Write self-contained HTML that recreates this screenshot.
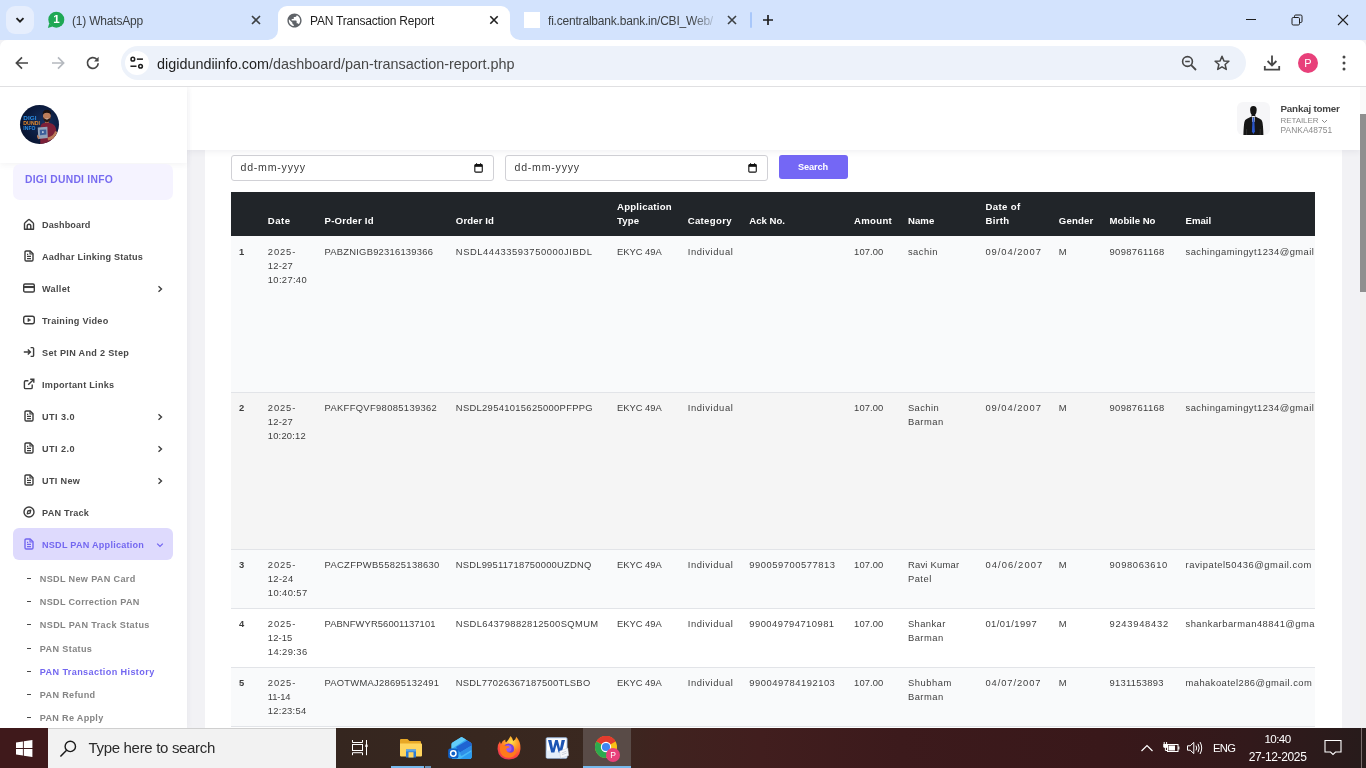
<!DOCTYPE html>
<html lang="en">
<head>
<meta charset="utf-8">
<title>PAN Transaction Report</title>
<style>
*{box-sizing:border-box;margin:0;padding:0}
html,body{width:1366px;height:768px;overflow:hidden;background:#fff;font-family:"Liberation Sans",sans-serif;}
.abs{position:absolute}
.t{position:absolute;white-space:nowrap}
#screen{will-change:transform;position:relative;width:1366px;height:768px;overflow:hidden;background:#f2f2f5}
#tabstrip{position:absolute;left:0;top:0;width:1366px;height:40px;background:#d3e3fd}
#toolbar{position:absolute;left:0;top:40px;width:1366px;height:47px;background:#fff;border-bottom:1px solid #e0e0e2;border-radius:7px 7px 0 0}
#omni{position:absolute;left:121px;top:6px;width:1125px;height:34px;border-radius:17px;background:#edf2fa}
.tabtxt{position:absolute;top:13.5px;font-size:12px;line-height:14px;color:#1f1f1f;white-space:nowrap;letter-spacing:-0.2px}
#page{position:absolute;left:0;top:87px;width:1366px;height:641px;overflow:hidden;background:#f2f2f5}
#sidebar{position:absolute;left:0;top:0;width:187px;height:641px;background:#fff;box-shadow:1px 0 6px rgba(60,60,90,.05)}
#topbar{position:absolute;left:187px;top:0;width:1173px;height:63px;background:#fff;box-shadow:0 2px 6px rgba(60,60,90,.07)}
#card{position:absolute;left:205px;top:63px;width:1137px;height:600px;background:#fff}
#tbl{position:absolute;left:231px;top:105px;width:1084px;height:560px;overflow:hidden}
.row{position:absolute;left:0;width:1084px;border-top:1px solid #e2e4e8}
.inp{position:absolute;top:68px;height:26px;width:263px;border:1px solid #d1d1d6;border-radius:3px;background:#fff}
#taskbar{position:absolute;left:0;top:728px;width:1366px;height:40px;background:linear-gradient(90deg,#3f191b 0px,#3f191b 48px,#35261f 336px,#38271f 480px,#3a2820 600px,#40221f 670px,#411e1e 760px,#3c1a1c 900px,#39181a 1100px,#32191b 1250px,#271b1b 1366px)}
.tb{position:absolute;color:#fff;white-space:nowrap}

</style>
</head>
<body>
<div id="screen">
<!--CHROME-->
<div id="tabstrip">
  <!-- tab search button -->
  <div class="abs" style="left:6px;top:6px;width:28px;height:28px;border-radius:9px;background:#e6eefd"></div>
  <svg class="abs" style="left:13px;top:13px" width="14" height="14" viewBox="0 0 14 14"><path d="M3.5 5.2 L7 8.7 L10.5 5.2" fill="none" stroke="#1f1f1f" stroke-width="1.9"/></svg>
  <!-- whatsapp tab -->
  <svg class="abs" style="left:47px;top:11px" width="18" height="18" viewBox="0 0 18 18"><circle cx="9.3" cy="8.7" r="8" fill="#1fa855"/><path d="M2.2 12.5 L0.9 17 L5.6 15.6Z" fill="#1fa855"/></svg>
  <div class="abs" style="left:52px;top:13px;width:9px;font-size:11.5px;font-weight:bold;color:#fff;line-height:13px;text-align:center">1</div>
  <div class="tabtxt" style="left:72px;color:#3c4043">(1) WhatsApp</div>
  <svg class="abs" style="left:250px;top:14px" width="12" height="12" viewBox="0 0 12 12"><path d="M2 2 L10 10 M10 2 L2 10" stroke="#3c4043" stroke-width="1.6"/></svg>
  <!-- active tab -->
  <div class="abs" style="left:278px;top:6px;width:232px;height:34px;background:#fff;border-radius:9px 9px 0 0"></div>
  <svg class="abs" style="left:268px;top:30px" width="10" height="10" viewBox="0 0 10 10"><path d="M10 0 V10 H0 A10 10 0 0 0 10 0Z" fill="#fff"/></svg>
  <svg class="abs" style="left:510px;top:30px" width="10" height="10" viewBox="0 0 10 10"><path d="M0 0 V10 H10 A10 10 0 0 1 0 0Z" fill="#fff"/></svg>
  <svg class="abs" style="left:285.5px;top:11.5px" width="17" height="17" viewBox="0 0 24 24"><path fill="#5f6368" d="M12 2C6.48 2 2 6.48 2 12s4.48 10 10 10 10-4.48 10-10S17.52 2 12 2zm-1 17.93c-3.95-.49-7-3.85-7-7.93 0-.62.08-1.21.21-1.79L9 15v1c0 1.1.9 2 2 2v1.93zm6.9-2.54c-.26-.81-1-1.39-1.9-1.39h-1v-3c0-.55-.45-1-1-1H8v-2h2c.55 0 1-.45 1-1V7h2c1.1 0 2-.9 2-2v-.41c2.93 1.19 5 4.06 5 7.41 0 2.08-.8 3.97-2.1 5.39z"/></svg>
  <div class="tabtxt" style="left:310px">PAN Transaction Report</div>
  <svg class="abs" style="left:488px;top:14px" width="12" height="12" viewBox="0 0 12 12"><path d="M2.3 2.3 L9.7 9.7 M9.7 2.3 L2.3 9.7" stroke="#1f1f1f" stroke-width="1.6"/></svg>
  <!-- third tab -->
  <div class="abs" style="left:524px;top:12px;width:16px;height:16px;background:#fff"></div>
  <div class="tabtxt" style="left:548px;color:#3c4043;width:171px;overflow:hidden;-webkit-mask-image:linear-gradient(90deg,#000 84%,transparent 100%);mask-image:linear-gradient(90deg,#000 84%,transparent 100%)">fi.centralbank.bank.in/CBI_Web/</div>
  <svg class="abs" style="left:726px;top:14px" width="12" height="12" viewBox="0 0 12 12"><path d="M2 2 L10 10 M10 2 L2 10" stroke="#3c4043" stroke-width="1.6"/></svg>
  <div class="abs" style="left:750px;top:12px;width:2px;height:16px;background:#a8c7fa;border-radius:1px"></div>
  <svg class="abs" style="left:761px;top:13px" width="14" height="14" viewBox="0 0 14 14"><path d="M7 2 V12 M2 7 H12" stroke="#1f1f1f" stroke-width="1.7"/></svg>
  <!-- window controls -->
  <div class="abs" style="left:1246px;top:19px;width:10px;height:1px;background:#1f1f1f"></div>
  <svg class="abs" style="left:1291px;top:14px" width="12" height="12" viewBox="0 0 12 12"><rect x="1" y="3.5" width="7.5" height="7.5" rx="1.2" fill="none" stroke="#1f1f1f" stroke-width="1"/><path d="M3.5 3.5 V2.2 Q3.5 1 4.7 1 H9.8 Q11 1 11 2.2 V7.3 Q11 8.5 9.8 8.5 H8.5" fill="none" stroke="#1f1f1f" stroke-width="1"/></svg>
  <svg class="abs" style="left:1337px;top:14px" width="12" height="12" viewBox="0 0 12 12"><path d="M1 1 L11 11 M11 1 L1 11" stroke="#1f1f1f" stroke-width="1.1"/></svg>
</div>
<div id="toolbar">
  <svg class="abs" style="left:14px;top:15px" width="16" height="16" viewBox="0 0 16 16"><path d="M14 8 H2.6 M8 2.4 L2.4 8 L8 13.6" fill="none" stroke="#474747" stroke-width="1.7"/></svg>
  <svg class="abs" style="left:50px;top:15px" width="16" height="16" viewBox="0 0 16 16"><path d="M2 8 H13.4 M8 2.4 L13.6 8 L8 13.6" fill="none" stroke="#b5b9bf" stroke-width="1.7"/></svg>
  <svg class="abs" style="left:85px;top:15px" width="16" height="16" viewBox="0 0 16 16"><path d="M13.2 8.2 A5.4 5.4 0 1 1 11.6 4.1" fill="none" stroke="#474747" stroke-width="1.7"/><path d="M13.6 1.8 V6.4 H9 Z" fill="#474747"/></svg>
  <div id="omni">
    <div class="abs" style="left:4px;top:5px;width:24px;height:24px;border-radius:12px;background:#fff"></div>
    <svg class="abs" style="left:8.3px;top:9.3px" width="15.4" height="15.4" viewBox="0 0 16 16"><circle cx="4" cy="4.3" r="1.9" fill="none" stroke="#1f1f1f" stroke-width="1.6"/><path d="M8.2 4.3 H14.5" stroke="#1f1f1f" stroke-width="1.6"/><circle cx="12" cy="11.7" r="1.9" fill="none" stroke="#1f1f1f" stroke-width="1.6"/><path d="M1.5 11.7 H7.8" stroke="#1f1f1f" stroke-width="1.6"/></svg>
    <div class="abs" style="left:36px;top:8px;font-size:14.4px;line-height:20px;color:#1f1f1f;white-space:nowrap;letter-spacing:0px">digidundiinfo.com<span style="color:#474747">/dashboard/pan-transaction-report.php</span></div>
    <svg class="abs" style="left:1059px;top:8px" width="18" height="18" viewBox="0 0 18 18"><circle cx="7.5" cy="7.5" r="4.9" fill="none" stroke="#474747" stroke-width="1.6"/><path d="M11.2 11.2 L16 16" stroke="#474747" stroke-width="1.8"/><path d="M5.2 7.5 H9.8" stroke="#474747" stroke-width="1.5"/></svg>
    <svg class="abs" style="left:1092px;top:8px" width="18" height="18" viewBox="0 0 18 18"><path d="M9 2.2 L10.9 6.9 L15.9 7.3 L12.1 10.5 L13.3 15.4 L9 12.8 L4.7 15.4 L5.9 10.5 L2.1 7.3 L7.1 6.9Z" fill="none" stroke="#474747" stroke-width="1.5" stroke-linejoin="round"/></svg>
  </div>
  <svg class="abs" style="left:1263px;top:14px" width="18" height="18" viewBox="0 0 18 18"><path d="M9 1.5 V11 M4.6 7 L9 11.4 L13.4 7" fill="none" stroke="#474747" stroke-width="1.8"/><path d="M1.8 12 V15.6 H16.2 V12" fill="none" stroke="#474747" stroke-width="1.8"/></svg>
  <div class="abs" style="left:1298px;top:13px;width:20px;height:20px;border-radius:10px;background:#e8407a;color:#fff;font-size:11px;line-height:20px;text-align:center">P</div>
  <svg class="abs" style="left:1341px;top:14px" width="6" height="18" viewBox="0 0 6 18"><circle cx="3" cy="3" r="1.5" fill="#474747"/><circle cx="3" cy="9" r="1.5" fill="#474747"/><circle cx="3" cy="15" r="1.5" fill="#474747"/></svg>
</div>

<!--PAGE-->
<div id="page">
<div id="card"></div>
<!-- filters -->
<div class="inp" style="left:231px"></div>
<div class="inp" style="left:505px"></div>
<svg class="abs" style="left:473.9px;top:76.2px" width="9.1" height="10" viewBox="0 0 10 11"><rect x="0.9" y="1.8" width="8.2" height="8.2" rx="1" fill="none" stroke="#111" stroke-width="1.2"/><rect x="0.9" y="1.8" width="8.2" height="2.4" fill="#111"/><path d="M2.8 0.4 V2 M7.2 0.4 V2" stroke="#111" stroke-width="1.2"/></svg>
<svg class="abs" style="left:747.9px;top:76.2px" width="9.1" height="10" viewBox="0 0 10 11"><rect x="0.9" y="1.8" width="8.2" height="8.2" rx="1" fill="none" stroke="#111" stroke-width="1.2"/><rect x="0.9" y="1.8" width="8.2" height="2.4" fill="#111"/><path d="M2.8 0.4 V2 M7.2 0.4 V2" stroke="#111" stroke-width="1.2"/></svg>
<div class="abs" style="left:779px;top:68px;width:69px;height:24px;border-radius:3px;background:#7467f5"></div>
<!-- table -->
<div id="tbl">
  <div class="abs" style="left:0;top:0;width:1084px;height:44px;background:#212529"></div>
  <div class="row" style="top:44px;height:157px;background:#f9fafb;border-top:0"></div>
  <div class="row" style="top:200px;height:158px;background:#f5f5f5"></div>
  <div class="row" style="top:357px;height:60px;background:#f9fafb"></div>
  <div class="row" style="top:416px;height:60px;background:#fff"></div>
  <div class="row" style="top:475px;height:60px;background:#f9fafb"></div>
  <div class="row" style="top:534px;height:59px;background:#fff"></div>
</div>
<div id="clipmain" class="abs" style="left:231px;top:0;width:1084px;height:641px;overflow:hidden"><div class="abs" style="left:-231px;top:0;width:1366px;height:641px">
<div class="t" style="left:267.8px;top:126.5px;font-size:9.6px;line-height:14px;font-weight:bold;color:#fff;letter-spacing:0.458px;">Date</div>
<div class="t" style="left:324.5px;top:126.5px;font-size:9.6px;line-height:14px;font-weight:bold;color:#fff;letter-spacing:0.240px;">P-Order Id</div>
<div class="t" style="left:455.8px;top:126.5px;font-size:9.6px;line-height:14px;font-weight:bold;color:#fff;letter-spacing:0.116px;">Order Id</div>
<div class="t" style="left:617.0px;top:112.5px;font-size:9.6px;line-height:14px;font-weight:bold;color:#fff;letter-spacing:0.235px;">Application</div>
<div class="t" style="left:617.0px;top:126.5px;font-size:9.6px;line-height:14px;font-weight:bold;color:#fff;letter-spacing:0.146px;">Type</div>
<div class="t" style="left:687.7px;top:126.5px;font-size:9.6px;line-height:14px;font-weight:bold;color:#fff;letter-spacing:0.321px;">Category</div>
<div class="t" style="left:749.3px;top:126.5px;font-size:9.6px;line-height:14px;font-weight:bold;color:#fff;letter-spacing:-0.021px;">Ack No.</div>
<div class="t" style="left:854.1px;top:126.5px;font-size:9.6px;line-height:14px;font-weight:bold;color:#fff;letter-spacing:0.285px;">Amount</div>
<div class="t" style="left:907.9px;top:126.5px;font-size:9.6px;line-height:14px;font-weight:bold;color:#fff;letter-spacing:0.074px;">Name</div>
<div class="t" style="left:985.4px;top:112.5px;font-size:9.6px;line-height:14px;font-weight:bold;color:#fff;letter-spacing:0.382px;">Date of</div>
<div class="t" style="left:985.4px;top:126.5px;font-size:9.6px;line-height:14px;font-weight:bold;color:#fff;letter-spacing:0.358px;">Birth</div>
<div class="t" style="left:1058.8px;top:126.5px;font-size:9.6px;line-height:14px;font-weight:bold;color:#fff;letter-spacing:0.165px;">Gender</div>
<div class="t" style="left:1109.5px;top:126.5px;font-size:9.6px;line-height:14px;font-weight:bold;color:#fff;letter-spacing:0.018px;">Mobile No</div>
<div class="t" style="left:1185.5px;top:126.5px;font-size:9.6px;line-height:14px;font-weight:bold;color:#fff;letter-spacing:0.020px;">Email</div>
<div class="t" style="left:239.0px;top:157.5px;font-size:9.4px;line-height:14px;font-weight:bold;color:#3e3e3e;letter-spacing:0.000px;">1</div>
<div class="t" style="left:267.8px;top:157.5px;font-size:9.4px;line-height:14px;color:#3e3e3e;letter-spacing:0.892px;">2025-</div>
<div class="t" style="left:267.8px;top:171.5px;font-size:9.4px;line-height:14px;color:#3e3e3e;letter-spacing:0.226px;">12-27</div>
<div class="t" style="left:267.8px;top:185.5px;font-size:9.4px;line-height:14px;color:#3e3e3e;letter-spacing:0.333px;">10:27:40</div>
<div class="t" style="left:324.5px;top:157.5px;font-size:9.4px;line-height:14px;color:#3e3e3e;letter-spacing:0.240px;">PABZNIGB92316139366</div>
<div class="t" style="left:455.8px;top:157.5px;font-size:9.4px;line-height:14px;color:#3e3e3e;letter-spacing:0.571px;">NSDL44433593750000JIBDL</div>
<div class="t" style="left:617.0px;top:157.5px;font-size:9.4px;line-height:14px;color:#3e3e3e;letter-spacing:-0.004px;">EKYC 49A</div>
<div class="t" style="left:687.7px;top:157.5px;font-size:9.4px;line-height:14px;color:#3e3e3e;letter-spacing:0.618px;">Individual</div>
<div class="t" style="left:854.1px;top:157.5px;font-size:9.4px;line-height:14px;color:#3e3e3e;letter-spacing:0.093px;">107.00</div>
<div class="t" style="left:907.9px;top:157.5px;font-size:9.4px;line-height:14px;color:#3e3e3e;letter-spacing:0.507px;">sachin</div>
<div class="t" style="left:985.4px;top:157.5px;font-size:9.4px;line-height:14px;color:#3e3e3e;letter-spacing:0.956px;">09/04/2007</div>
<div class="t" style="left:1058.8px;top:157.5px;font-size:9.4px;line-height:14px;color:#3e3e3e;letter-spacing:0.000px;">M</div>
<div class="t" style="left:1109.5px;top:157.5px;font-size:9.4px;line-height:14px;color:#3e3e3e;letter-spacing:0.373px;">9098761168</div>
<div class="t" style="left:1185.5px;top:157.5px;font-size:9.4px;line-height:14px;color:#3e3e3e;letter-spacing:0.454px;">sachingamingyt1234@gmail.com</div>
<div class="t" style="left:239.0px;top:313.5px;font-size:9.4px;line-height:14px;font-weight:bold;color:#3e3e3e;letter-spacing:0.000px;">2</div>
<div class="t" style="left:267.8px;top:313.5px;font-size:9.4px;line-height:14px;color:#3e3e3e;letter-spacing:0.892px;">2025-</div>
<div class="t" style="left:267.8px;top:327.5px;font-size:9.4px;line-height:14px;color:#3e3e3e;letter-spacing:0.226px;">12-27</div>
<div class="t" style="left:267.8px;top:341.5px;font-size:9.4px;line-height:14px;color:#3e3e3e;letter-spacing:0.200px;">10:20:12</div>
<div class="t" style="left:324.5px;top:313.5px;font-size:9.4px;line-height:14px;color:#3e3e3e;letter-spacing:0.344px;">PAKFFQVF98085139362</div>
<div class="t" style="left:455.8px;top:313.5px;font-size:9.4px;line-height:14px;color:#3e3e3e;letter-spacing:0.321px;">NSDL29541015625000PFPPG</div>
<div class="t" style="left:617.0px;top:313.5px;font-size:9.4px;line-height:14px;color:#3e3e3e;letter-spacing:-0.004px;">EKYC 49A</div>
<div class="t" style="left:687.7px;top:313.5px;font-size:9.4px;line-height:14px;color:#3e3e3e;letter-spacing:0.618px;">Individual</div>
<div class="t" style="left:854.1px;top:313.5px;font-size:9.4px;line-height:14px;color:#3e3e3e;letter-spacing:0.093px;">107.00</div>
<div class="t" style="left:907.9px;top:313.5px;font-size:9.4px;line-height:14px;color:#3e3e3e;letter-spacing:0.423px;">Sachin</div>
<div class="t" style="left:907.9px;top:327.5px;font-size:9.4px;line-height:14px;color:#3e3e3e;letter-spacing:0.486px;">Barman</div>
<div class="t" style="left:985.4px;top:313.5px;font-size:9.4px;line-height:14px;color:#3e3e3e;letter-spacing:0.956px;">09/04/2007</div>
<div class="t" style="left:1058.8px;top:313.5px;font-size:9.4px;line-height:14px;color:#3e3e3e;letter-spacing:0.000px;">M</div>
<div class="t" style="left:1109.5px;top:313.5px;font-size:9.4px;line-height:14px;color:#3e3e3e;letter-spacing:0.373px;">9098761168</div>
<div class="t" style="left:1185.5px;top:313.5px;font-size:9.4px;line-height:14px;color:#3e3e3e;letter-spacing:0.454px;">sachingamingyt1234@gmail.com</div>
<div class="t" style="left:239.0px;top:470.5px;font-size:9.4px;line-height:14px;font-weight:bold;color:#3e3e3e;letter-spacing:0.000px;">3</div>
<div class="t" style="left:267.8px;top:470.5px;font-size:9.4px;line-height:14px;color:#3e3e3e;letter-spacing:0.892px;">2025-</div>
<div class="t" style="left:267.8px;top:484.5px;font-size:9.4px;line-height:14px;color:#3e3e3e;letter-spacing:0.337px;">12-24</div>
<div class="t" style="left:267.8px;top:498.5px;font-size:9.4px;line-height:14px;color:#3e3e3e;letter-spacing:0.400px;">10:40:57</div>
<div class="t" style="left:324.5px;top:470.5px;font-size:9.4px;line-height:14px;color:#3e3e3e;letter-spacing:0.338px;">PACZFPWB55825138630</div>
<div class="t" style="left:455.8px;top:470.5px;font-size:9.4px;line-height:14px;color:#3e3e3e;letter-spacing:0.216px;">NSDL99511718750000UZDNQ</div>
<div class="t" style="left:617.0px;top:470.5px;font-size:9.4px;line-height:14px;color:#3e3e3e;letter-spacing:-0.004px;">EKYC 49A</div>
<div class="t" style="left:687.7px;top:470.5px;font-size:9.4px;line-height:14px;color:#3e3e3e;letter-spacing:0.618px;">Individual</div>
<div class="t" style="left:749.3px;top:470.5px;font-size:9.4px;line-height:14px;color:#3e3e3e;letter-spacing:0.537px;">990059700577813</div>
<div class="t" style="left:854.1px;top:470.5px;font-size:9.4px;line-height:14px;color:#3e3e3e;letter-spacing:0.093px;">107.00</div>
<div class="t" style="left:907.9px;top:470.5px;font-size:9.4px;line-height:14px;color:#3e3e3e;letter-spacing:0.254px;">Ravi Kumar</div>
<div class="t" style="left:907.9px;top:484.5px;font-size:9.4px;line-height:14px;color:#3e3e3e;letter-spacing:0.494px;">Patel</div>
<div class="t" style="left:985.4px;top:470.5px;font-size:9.4px;line-height:14px;color:#3e3e3e;letter-spacing:1.103px;">04/06/2007</div>
<div class="t" style="left:1058.8px;top:470.5px;font-size:9.4px;line-height:14px;color:#3e3e3e;letter-spacing:0.000px;">M</div>
<div class="t" style="left:1109.5px;top:470.5px;font-size:9.4px;line-height:14px;color:#3e3e3e;letter-spacing:0.617px;">9098063610</div>
<div class="t" style="left:1185.5px;top:470.5px;font-size:9.4px;line-height:14px;color:#3e3e3e;letter-spacing:0.521px;">ravipatel50436@gmail.com</div>
<div class="t" style="left:239.0px;top:529.5px;font-size:9.4px;line-height:14px;font-weight:bold;color:#3e3e3e;letter-spacing:0.000px;">4</div>
<div class="t" style="left:267.8px;top:529.5px;font-size:9.4px;line-height:14px;color:#3e3e3e;letter-spacing:0.892px;">2025-</div>
<div class="t" style="left:267.8px;top:543.5px;font-size:9.4px;line-height:14px;color:#3e3e3e;letter-spacing:0.115px;">12-15</div>
<div class="t" style="left:267.8px;top:557.5px;font-size:9.4px;line-height:14px;color:#3e3e3e;letter-spacing:0.400px;">14:29:36</div>
<div class="t" style="left:324.5px;top:529.5px;font-size:9.4px;line-height:14px;color:#3e3e3e;letter-spacing:0.103px;">PABNFWYR56001137101</div>
<div class="t" style="left:455.8px;top:529.5px;font-size:9.4px;line-height:14px;color:#3e3e3e;letter-spacing:0.381px;">NSDL64379882812500SQMUM</div>
<div class="t" style="left:617.0px;top:529.5px;font-size:9.4px;line-height:14px;color:#3e3e3e;letter-spacing:-0.004px;">EKYC 49A</div>
<div class="t" style="left:687.7px;top:529.5px;font-size:9.4px;line-height:14px;color:#3e3e3e;letter-spacing:0.618px;">Individual</div>
<div class="t" style="left:749.3px;top:529.5px;font-size:9.4px;line-height:14px;color:#3e3e3e;letter-spacing:0.468px;">990049794710981</div>
<div class="t" style="left:854.1px;top:529.5px;font-size:9.4px;line-height:14px;color:#3e3e3e;letter-spacing:0.093px;">107.00</div>
<div class="t" style="left:907.9px;top:529.5px;font-size:9.4px;line-height:14px;color:#3e3e3e;letter-spacing:0.427px;">Shankar</div>
<div class="t" style="left:907.9px;top:543.5px;font-size:9.4px;line-height:14px;color:#3e3e3e;letter-spacing:0.486px;">Barman</div>
<div class="t" style="left:985.4px;top:529.5px;font-size:9.4px;line-height:14px;color:#3e3e3e;letter-spacing:0.482px;">01/01/1997</div>
<div class="t" style="left:1058.8px;top:529.5px;font-size:9.4px;line-height:14px;color:#3e3e3e;letter-spacing:0.000px;">M</div>
<div class="t" style="left:1109.5px;top:529.5px;font-size:9.4px;line-height:14px;color:#3e3e3e;letter-spacing:0.722px;">9243948432</div>
<div class="t" style="left:1185.5px;top:529.5px;font-size:9.4px;line-height:14px;color:#3e3e3e;letter-spacing:0.481px;">shankarbarman48841@gmail.com</div>
<div class="t" style="left:239.0px;top:588.5px;font-size:9.4px;line-height:14px;font-weight:bold;color:#3e3e3e;letter-spacing:0.000px;">5</div>
<div class="t" style="left:267.8px;top:588.5px;font-size:9.4px;line-height:14px;color:#3e3e3e;letter-spacing:0.892px;">2025-</div>
<div class="t" style="left:267.8px;top:602.5px;font-size:9.4px;line-height:14px;color:#3e3e3e;letter-spacing:-0.151px;">11-14</div>
<div class="t" style="left:267.8px;top:616.5px;font-size:9.4px;line-height:14px;color:#3e3e3e;letter-spacing:0.267px;">12:23:54</div>
<div class="t" style="left:324.5px;top:588.5px;font-size:9.4px;line-height:14px;color:#3e3e3e;letter-spacing:0.255px;">PAOTWMAJ28695132491</div>
<div class="t" style="left:455.8px;top:588.5px;font-size:9.4px;line-height:14px;color:#3e3e3e;letter-spacing:0.256px;">NSDL77026367187500TLSBO</div>
<div class="t" style="left:617.0px;top:588.5px;font-size:9.4px;line-height:14px;color:#3e3e3e;letter-spacing:-0.004px;">EKYC 49A</div>
<div class="t" style="left:687.7px;top:588.5px;font-size:9.4px;line-height:14px;color:#3e3e3e;letter-spacing:0.618px;">Individual</div>
<div class="t" style="left:749.3px;top:588.5px;font-size:9.4px;line-height:14px;color:#3e3e3e;letter-spacing:0.523px;">990049784192103</div>
<div class="t" style="left:854.1px;top:588.5px;font-size:9.4px;line-height:14px;color:#3e3e3e;letter-spacing:0.093px;">107.00</div>
<div class="t" style="left:907.9px;top:588.5px;font-size:9.4px;line-height:14px;color:#3e3e3e;letter-spacing:0.548px;">Shubham</div>
<div class="t" style="left:907.9px;top:602.5px;font-size:9.4px;line-height:14px;color:#3e3e3e;letter-spacing:0.486px;">Barman</div>
<div class="t" style="left:985.4px;top:588.5px;font-size:9.4px;line-height:14px;color:#3e3e3e;letter-spacing:0.913px;">04/07/2007</div>
<div class="t" style="left:1058.8px;top:588.5px;font-size:9.4px;line-height:14px;color:#3e3e3e;letter-spacing:0.000px;">M</div>
<div class="t" style="left:1109.5px;top:588.5px;font-size:9.4px;line-height:14px;color:#3e3e3e;letter-spacing:0.268px;">9131153893</div>
<div class="t" style="left:1185.5px;top:588.5px;font-size:9.4px;line-height:14px;color:#3e3e3e;letter-spacing:0.451px;">mahakoatel286@gmail.com</div>
<div class="t" style="left:240.5px;top:72.6px;font-size:10.6px;line-height:14px;color:#3c3c3c;letter-spacing:0.770px;">dd-mm-yyyy</div>
<div class="t" style="left:514.5px;top:72.6px;font-size:10.6px;line-height:14px;color:#3c3c3c;letter-spacing:0.770px;">dd-mm-yyyy</div>
<div class="t" style="left:798.0px;top:73.0px;font-size:9.2px;line-height:14px;font-weight:bold;color:#fff;letter-spacing:-0.119px;">Search</div>
</div></div>
<div id="topbar">
  <div class="abs" style="left:1050px;top:15px;width:33px;height:33px;border-radius:6px;background:#f6f6f8;overflow:hidden">
    <svg class="abs" style="left:0;top:0" width="33" height="33" viewBox="0 0 33 33"><path d="M16.4 4 Q19.8 4 19.7 8 Q19.6 11 18.3 12.4 L18.3 14 H14.5 L14.5 12.4 Q13.2 11 13.1 8 Q13 4 16.4 4Z" fill="#141414"/><path d="M6.4 33 Q6.6 24 7.4 20 Q7.8 17.6 10 16.8 L14.6 14.6 L16.4 15.6 L18.2 14.6 L22.8 16.8 Q25 17.6 25.4 20 Q26.2 24 26.4 33Z" fill="#161616"/><path d="M14.9 14.8 L16.4 16.2 L17.9 14.8 L17.6 20 H15.2Z" fill="#dfe3ee"/><path d="M15.6 15.6 H17.2 L17.9 29.6 L16.4 32 L14.9 29.6Z" fill="#2a55c8"/><path d="M9.6 27 V33 M23.2 27 V33" stroke="#3a3a3a" stroke-width="0.7"/></svg>
  </div>
  <svg class="abs" style="left:1133.7px;top:31.6px" width="7" height="5" viewBox="0 0 7 5"><path d="M1 1 L3.5 3.5 L6 1" fill="none" stroke="#8a8a8a" stroke-width="1"/></svg>
</div>
<div class="t" style="left:1280.5px;top:14.6px;font-size:9.8px;line-height:14px;font-weight:bold;color:#444;letter-spacing:-0.194px;">Pankaj tomer</div>
<div class="t" style="left:1280.5px;top:29.3px;font-size:8.0px;line-height:10px;color:#8a8a8a;letter-spacing:-0.071px;">RETAILER</div>
<div class="t" style="left:1280.5px;top:37.6px;font-size:8.4px;line-height:10px;color:#8a8a8a;letter-spacing:0.057px;">PANKA48751</div>
<div id="sidebar">
  <div class="abs" style="left:0;top:0;width:187px;height:76px;background:#fff;box-shadow:0 2px 6px rgba(60,60,90,.06)"></div>
  <!-- logo -->
  <div class="abs" style="left:19.8px;top:17.6px;width:39.4px;height:39.4px;border-radius:20px;background:radial-gradient(circle at 62% 45%,#16305f 0%,#0b1a3c 55%,#060e24 100%);overflow:hidden">
    <svg class="abs" style="left:0;top:0" width="39.4" height="39.4" viewBox="0 0 40 40">
      <path d="M20.6 40 V24 Q20.6 19.4 24 18.4 L27.2 17.2 L30.4 18.4 Q36.8 19.8 37 27 V40Z" fill="#7c2038"/>
      <rect x="25.4" y="14.6" width="3.8" height="3.6" fill="#a96a4a"/>
      <ellipse cx="27.3" cy="11.2" rx="4" ry="5.2" fill="#bb7d5a"/>
      <path d="M23 10.4 Q22.6 4.8 27.3 4.8 Q32 4.8 31.6 10.4 Q31 7.8 27.3 7.8 Q23.6 7.8 23 10.4Z" fill="#181010"/>
      <path d="M23.4 12 Q23.6 17.4 27.3 17.4 Q31 17.4 31.2 12 Q30.6 14.4 27.3 14.2 Q24 14.4 23.4 12Z" fill="#2a1a15"/>
      <path d="M25.8 13.8 Q27.3 15 28.8 13.8" stroke="#f2e6dc" stroke-width="0.7" fill="none"/>
      <path d="M18 22.8 L27.8 22.2 L28.2 33.4 L18.6 34.6Z" fill="#93a3ba"/>
      <path d="M20 25.2 L26.6 24.8 L26.8 30 L20.3 30.6Z" fill="#3b5f9a"/>
      <path d="M22.6 26.4 L24.6 27.5 L22.7 28.8Z" fill="#f0f4f8"/>
      <path d="M17.4 30 Q16.6 33 18.6 35 L20 33Z" fill="#bb7d5a"/>
      <path d="M28 33 Q34.5 31.5 35.6 26.4 L37.8 27.4 Q36.8 34.6 28.4 36Z" fill="#bb7d5a"/>
      <text x="3.4" y="14.9" font-family="Liberation Sans, sans-serif" font-size="5.3" font-weight="bold" fill="#2b8fe6" textLength="13.3" lengthAdjust="spacingAndGlyphs">DIGI</text>
      <text x="3.4" y="20.6" font-family="Liberation Sans, sans-serif" font-size="5.3" font-weight="bold" fill="#e48a2c" textLength="16.8" lengthAdjust="spacingAndGlyphs">DUNDI</text>
      <text x="3.4" y="25.6" font-family="Liberation Sans, sans-serif" font-size="5.3" font-weight="bold" fill="#2b8fe6" textLength="12.3" lengthAdjust="spacingAndGlyphs">INFO</text>
    </svg>
  </div>
  <!-- brand box -->
  <div class="abs" style="left:13px;top:77px;width:160px;height:36px;border-radius:7px;background:#f5f3ff"></div>
  <div class="t" style="left:25px;top:86px;font-size:10.3px;line-height:13px;font-weight:bold;color:#776bf0;letter-spacing:0.26px">DIGI DUNDI INFO</div>
<svg class="abs" style="left:23.0px;top:131.2px" width="12" height="12" viewBox="0 0 12 12"><path d="M1.5 11.2 V5.7 Q1.5 5.1 2 4.7 L5.4 1.7 Q6 1.2 6.6 1.7 L10 4.7 Q10.5 5.1 10.5 5.7 V11.2 Z" fill="none" stroke="#3c3c3c" stroke-width="1.4" stroke-linejoin="round"/><path d="M4.2 11.2 V8 A1.8 1.8 0 0 1 7.8 8 V11.2" fill="none" stroke="#3c3c3c" stroke-width="1.4"/></svg>
<div class="t" style="left:42.0px;top:132.0px;font-size:9.1px;line-height:12px;font-weight:bold;color:#484848;letter-spacing:0.106px;">Dashboard</div>
<svg class="abs" style="left:23.0px;top:163.2px" width="12" height="12" viewBox="0 0 12 12"><path d="M2 2.2 Q2 1 3.2 1 H7.2 L10 3.8 V9.8 Q10 11 8.8 11 H3.2 Q2 11 2 9.8Z" fill="none" stroke="#3c3c3c" stroke-width="1.4" stroke-linejoin="round"/><path d="M7 1.2 V4 H9.8" fill="none" stroke="#3c3c3c" stroke-width="1.2"/><path d="M4 6.4 H8 M4 8.6 H8" stroke="#3c3c3c" stroke-width="1.25"/><path d="M4 4.3 H5.2" stroke="#3c3c3c" stroke-width="1.25"/></svg>
<div class="t" style="left:42.0px;top:164.0px;font-size:9.1px;line-height:12px;font-weight:bold;color:#484848;letter-spacing:0.219px;">Aadhar Linking Status</div>
<svg class="abs" style="left:23.0px;top:195.2px" width="12" height="12" viewBox="0 0 12 12"><rect x="0.7" y="2" width="10.6" height="8" rx="1.3" fill="none" stroke="#3c3c3c" stroke-width="1.4"/><path d="M0.7 5 H11.3" stroke="#3c3c3c" stroke-width="2.1"/></svg>
<div class="t" style="left:42.0px;top:196.0px;font-size:9.1px;line-height:12px;font-weight:bold;color:#484848;letter-spacing:0.336px;">Wallet</div>
<svg class="abs" style="left:154.4px;top:196.0px" width="12" height="12" viewBox="0 0 12 12"><path d="M4.5 3.3 L7.5 6 L4.5 8.7" fill="none" stroke="#3c3c3c" stroke-width="1.35"/></svg>
<svg class="abs" style="left:23.0px;top:227.2px" width="12" height="12" viewBox="0 0 12 12"><rect x="0.7" y="2.2" width="10.6" height="7.6" rx="2" fill="none" stroke="#3c3c3c" stroke-width="1.4"/><path d="M4.9 4.3 L7.8 6 L4.9 7.7Z" fill="#3c3c3c" stroke="#3c3c3c" stroke-width="0.5" stroke-linejoin="round"/></svg>
<div class="t" style="left:42.0px;top:228.0px;font-size:9.1px;line-height:12px;font-weight:bold;color:#484848;letter-spacing:0.289px;">Training Video</div>
<svg class="abs" style="left:23.0px;top:259.2px" width="12" height="12" viewBox="0 0 12 12"><path d="M0.8 6 H7.2 M4.8 3.4 L7.4 6 L4.8 8.6" fill="none" stroke="#3c3c3c" stroke-width="1.4"/><path d="M7.6 1.6 H9.6 Q10.6 1.6 10.6 2.6 V9.4 Q10.6 10.4 9.6 10.4 H7.6" fill="none" stroke="#3c3c3c" stroke-width="1.4"/></svg>
<div class="t" style="left:42.0px;top:260.0px;font-size:9.1px;line-height:12px;font-weight:bold;color:#484848;letter-spacing:0.312px;">Set PIN And 2 Step</div>
<svg class="abs" style="left:23.0px;top:291.2px" width="12" height="12" viewBox="0 0 12 12"><path d="M5.4 2.8 H2.6 Q1.4 2.8 1.4 4 V9.4 Q1.4 10.6 2.6 10.6 H8 Q9.2 10.6 9.2 9.4 V6.6" fill="none" stroke="#3c3c3c" stroke-width="1.4"/><path d="M5.2 6.8 L10.6 1.4 M7.2 1.2 H10.8 V4.8" fill="none" stroke="#3c3c3c" stroke-width="1.4"/></svg>
<div class="t" style="left:42.0px;top:292.0px;font-size:9.1px;line-height:12px;font-weight:bold;color:#484848;letter-spacing:0.281px;">Important Links</div>
<svg class="abs" style="left:23.0px;top:323.2px" width="12" height="12" viewBox="0 0 12 12"><path d="M2 2.2 Q2 1 3.2 1 H7.2 L10 3.8 V9.8 Q10 11 8.8 11 H3.2 Q2 11 2 9.8Z" fill="none" stroke="#3c3c3c" stroke-width="1.4" stroke-linejoin="round"/><path d="M7 1.2 V4 H9.8" fill="none" stroke="#3c3c3c" stroke-width="1.2"/><path d="M4 6.4 H8 M4 8.6 H8" stroke="#3c3c3c" stroke-width="1.25"/><path d="M4 4.3 H5.2" stroke="#3c3c3c" stroke-width="1.25"/></svg>
<div class="t" style="left:42.0px;top:324.0px;font-size:9.1px;line-height:12px;font-weight:bold;color:#484848;letter-spacing:0.442px;">UTI 3.0</div>
<svg class="abs" style="left:154.4px;top:324.0px" width="12" height="12" viewBox="0 0 12 12"><path d="M4.5 3.3 L7.5 6 L4.5 8.7" fill="none" stroke="#3c3c3c" stroke-width="1.35"/></svg>
<svg class="abs" style="left:23.0px;top:355.2px" width="12" height="12" viewBox="0 0 12 12"><path d="M2 2.2 Q2 1 3.2 1 H7.2 L10 3.8 V9.8 Q10 11 8.8 11 H3.2 Q2 11 2 9.8Z" fill="none" stroke="#3c3c3c" stroke-width="1.4" stroke-linejoin="round"/><path d="M7 1.2 V4 H9.8" fill="none" stroke="#3c3c3c" stroke-width="1.2"/><path d="M4 6.4 H8 M4 8.6 H8" stroke="#3c3c3c" stroke-width="1.25"/><path d="M4 4.3 H5.2" stroke="#3c3c3c" stroke-width="1.25"/></svg>
<div class="t" style="left:42.0px;top:356.0px;font-size:9.1px;line-height:12px;font-weight:bold;color:#484848;letter-spacing:0.442px;">UTI 2.0</div>
<svg class="abs" style="left:154.4px;top:356.0px" width="12" height="12" viewBox="0 0 12 12"><path d="M4.5 3.3 L7.5 6 L4.5 8.7" fill="none" stroke="#3c3c3c" stroke-width="1.35"/></svg>
<svg class="abs" style="left:23.0px;top:387.2px" width="12" height="12" viewBox="0 0 12 12"><path d="M2 2.2 Q2 1 3.2 1 H7.2 L10 3.8 V9.8 Q10 11 8.8 11 H3.2 Q2 11 2 9.8Z" fill="none" stroke="#3c3c3c" stroke-width="1.4" stroke-linejoin="round"/><path d="M7 1.2 V4 H9.8" fill="none" stroke="#3c3c3c" stroke-width="1.2"/><path d="M4 6.4 H8 M4 8.6 H8" stroke="#3c3c3c" stroke-width="1.25"/><path d="M4 4.3 H5.2" stroke="#3c3c3c" stroke-width="1.25"/></svg>
<div class="t" style="left:42.0px;top:388.0px;font-size:9.1px;line-height:12px;font-weight:bold;color:#484848;letter-spacing:0.327px;">UTI New</div>
<svg class="abs" style="left:154.4px;top:388.0px" width="12" height="12" viewBox="0 0 12 12"><path d="M4.5 3.3 L7.5 6 L4.5 8.7" fill="none" stroke="#3c3c3c" stroke-width="1.35"/></svg>
<svg class="abs" style="left:23.0px;top:419.2px" width="12" height="12" viewBox="0 0 12 12"><circle cx="6" cy="6" r="5" fill="none" stroke="#3c3c3c" stroke-width="1.4"/><path d="M4.2 7.8 L4.9 4.9 L7.8 4.2 L7.1 7.1Z" fill="none" stroke="#3c3c3c" stroke-width="1.25" stroke-linejoin="round"/></svg>
<div class="t" style="left:42.0px;top:420.0px;font-size:9.1px;line-height:12px;font-weight:bold;color:#484848;letter-spacing:0.256px;">PAN Track</div>
<div class="abs" style="left:13px;top:441.0px;width:160px;height:32px;background:#dedafd;border-radius:6px"></div>
<svg class="abs" style="left:23.0px;top:451.2px" width="12" height="12" viewBox="0 0 12 12"><path d="M2 2.2 Q2 1 3.2 1 H7.2 L10 3.8 V9.8 Q10 11 8.8 11 H3.2 Q2 11 2 9.8Z" fill="none" stroke="#7367f0" stroke-width="1.4" stroke-linejoin="round"/><path d="M7 1.2 V4 H9.8" fill="none" stroke="#7367f0" stroke-width="1.2"/><path d="M4 6.4 H8 M4 8.6 H8" stroke="#7367f0" stroke-width="1.25"/><path d="M4 4.3 H5.2" stroke="#7367f0" stroke-width="1.25"/></svg>
<div class="t" style="left:42.0px;top:452.0px;font-size:9.1px;line-height:12px;font-weight:bold;color:#7367f0;letter-spacing:0.239px;">NSDL PAN Application</div>
<svg class="abs" style="left:153.6px;top:451.6px" width="12" height="12" viewBox="0 0 12 12"><path d="M3.2 4.6 L6 7.4 L8.8 4.6" fill="none" stroke="#7367f0" stroke-width="1.3"/></svg>
<div class="abs" style="left:27px;top:491.0px;width:4.4px;height:1.2px;background:#4a4a4a;border-radius:0px"></div>
<div class="t" style="left:39.8px;top:486.0px;font-size:9.1px;line-height:12px;font-weight:bold;color:#848484;letter-spacing:0.332px;">NSDL New PAN Card</div>
<div class="abs" style="left:27px;top:514.0px;width:4.4px;height:1.2px;background:#4a4a4a;border-radius:0px"></div>
<div class="t" style="left:39.8px;top:509.0px;font-size:9.1px;line-height:12px;font-weight:bold;color:#848484;letter-spacing:0.305px;">NSDL Correction PAN</div>
<div class="abs" style="left:27px;top:537.0px;width:4.4px;height:1.2px;background:#4a4a4a;border-radius:0px"></div>
<div class="t" style="left:39.8px;top:532.0px;font-size:9.1px;line-height:12px;font-weight:bold;color:#848484;letter-spacing:0.368px;">NSDL PAN Track Status</div>
<div class="abs" style="left:27px;top:561.0px;width:4.4px;height:1.2px;background:#4a4a4a;border-radius:0px"></div>
<div class="t" style="left:39.8px;top:556.0px;font-size:9.1px;line-height:12px;font-weight:bold;color:#848484;letter-spacing:0.364px;">PAN Status</div>
<div class="abs" style="left:27px;top:584.0px;width:4.4px;height:1.2px;background:#4a4a4a;border-radius:0px"></div>
<div class="t" style="left:39.8px;top:579.0px;font-size:9.1px;line-height:12px;font-weight:bold;color:#7367f0;letter-spacing:0.384px;">PAN Transaction History</div>
<div class="abs" style="left:27px;top:607.0px;width:4.4px;height:1.2px;background:#4a4a4a;border-radius:0px"></div>
<div class="t" style="left:39.8px;top:602.0px;font-size:9.1px;line-height:12px;font-weight:bold;color:#848484;letter-spacing:0.329px;">PAN Refund</div>
<div class="abs" style="left:27px;top:630.0px;width:4.4px;height:1.2px;background:#4a4a4a;border-radius:0px"></div>
<div class="t" style="left:39.8px;top:625.0px;font-size:9.1px;line-height:12px;font-weight:bold;color:#848484;letter-spacing:0.301px;">PAN Re Apply</div>
</div>
<!-- scrollbar -->
<div class="abs" style="left:1360px;top:0;width:6px;height:641px;background:#f1f1f1"></div>
<div class="abs" style="left:1360px;top:0;width:6px;height:27px;background:#fafafa"></div>
<div class="abs" style="left:1360px;top:27px;width:6px;height:178px;background:#8f8f8f"></div>

</div>
<!--TASKBAR-->
<div id="taskbar">
  <!-- start -->
  <svg class="abs" style="left:16px;top:12px" width="17" height="17" viewBox="0 0 17 17"><path d="M0 2.4 L6.9 1.4 V8 H0Z M7.8 1.3 L16.4 0 V8 H7.8Z M0 8.9 H6.9 V15.5 L0 14.5Z M7.8 8.9 H16.4 V17 L7.8 15.7Z" fill="#fff"/></svg>
  <!-- search box -->
  <div class="abs" style="left:48px;top:0;width:288px;height:40px;background:#f2f2f2;border-top:1px solid #cfcfcf"></div>
  <svg class="abs" style="left:58px;top:11px" width="20" height="20" viewBox="0 0 20 20"><circle cx="12.3" cy="7.4" r="5.2" fill="none" stroke="#1b1b1b" stroke-width="1.4"/><path d="M8.6 11.2 L2.4 17.6" stroke="#1b1b1b" stroke-width="1.5"/></svg>
  <div class="abs" style="left:88.5px;top:9.5px;font-size:15px;line-height:20px;color:#2b2b2b;white-space:nowrap;letter-spacing:-0.32px">Type here to search</div>

  <!-- task view -->
  <svg class="abs" style="left:350px;top:10px" width="20" height="20" viewBox="0 0 20 20"><rect x="2.5" y="6.5" width="10" height="6" fill="none" stroke="#fff" stroke-width="1"/><path d="M2.5 2 V4.5 H12.5 V2 M2.5 17.2 V14.7 H12.5 V17.2" fill="none" stroke="#fff" stroke-width="1"/><path d="M16.5 2 V17.2" stroke="#fff" stroke-width="1"/><rect x="15.4" y="6.6" width="2.2" height="2.4" fill="#fff"/></svg>
  <!-- explorer -->
  <svg class="abs" style="left:399px;top:9px" width="24" height="22" viewBox="0 0 24 22"><path d="M1 3 Q1 2 2 2 H8.5 L10.5 4 H21 Q22 4 22 5 V18 H1Z" fill="#e8a826"/><path d="M1 6.5 H22.4 Q23 6.5 23 7.2 V18.6 Q23 19.4 22.2 19.4 H1.8 Q1 19.4 1 18.6Z" fill="#ffd55e"/><path d="M7 12.5 H17 V20.5 H7Z" fill="#2d7bd4"/><path d="M9.5 15.2 H14.5 V20.5 H9.5Z" fill="#ffd55e"/><path d="M7 12.5 H17 V14.5 H7Z" fill="#5aa5ea"/></svg>
  <div class="abs" style="left:391px;top:37.7px;width:33px;height:2.3px;background:#76b9ed"></div>
  <div class="abs" style="left:425px;top:37.7px;width:6px;height:2.3px;background:#6792b8"></div>
  <!-- outlook -->
  <svg class="abs" style="left:447px;top:8px" width="26" height="26" viewBox="0 0 26 26"><path d="M4.5 8.2 Q4.5 7 5.5 6.4 L13.6 1.4 Q14.6 0.8 15.6 1.4 L23.6 6.4 Q24.6 7 24.6 8.2 V20.4 Q24.6 23 22 23 H7 Q4.5 23 4.5 20.4Z" fill="#35a7f2"/><path d="M4.5 8.2 Q4.5 7 5.5 6.4 L13.6 1.4 Q14.6 0.8 15.6 1.4 L19 3.6 L4.5 13Z" fill="#62cdfa"/><path d="M9 11 L20.4 4.4 L24.2 6.9 Q24.6 7.4 24.6 8.2 V9.4 L13 16.4Z" fill="#1f64d2"/><path d="M13 16.4 L24.6 9.4 V14 L14.6 20Z" fill="#2f8ee8"/><path d="M4.5 14 L14.6 20 L24.6 14 V20.4 Q24.6 23 22 23 H7 Q4.5 23 4.5 20.4Z" fill="#49b8f6"/><path d="M13 23 L24.6 15.5 V20.4 Q24.6 23 22 23Z" fill="#2a9af0"/><rect x="1.2" y="12.4" width="10.2" height="10.2" rx="2" fill="#1062c8"/><circle cx="6.3" cy="17.5" r="2.7" fill="none" stroke="#fff" stroke-width="1.5"/></svg>
  <!-- firefox -->
  <svg class="abs" style="left:496px;top:7px" width="26" height="26" viewBox="0 0 26 26"><defs><radialGradient id="ffg" cx="60%" cy="25%" r="85%"><stop offset="0" stop-color="#ffe14a"/><stop offset="0.35" stop-color="#ff9a26"/><stop offset="0.7" stop-color="#ff4a3a"/><stop offset="1" stop-color="#e02c66"/></radialGradient></defs><path d="M14.5 1 Q17 3.4 17.2 6 Q20.5 3.8 20 1.6 Q25 6.8 24.4 14.4 Q23.6 24 13 24.6 Q2.4 24 1.6 14.2 Q1.4 9.4 4 6.2 Q4.2 8 5 9 Q6.4 5.4 9.4 4.6 Q9 6.4 10 7.6 Q12.6 5 14.5 1Z" fill="url(#ffg)"/><circle cx="12.6" cy="14" r="5.6" fill="#7a3fd8"/><circle cx="12.2" cy="13.4" r="3.4" fill="#9a5cf0"/><path d="M4.4 10.6 Q8 9.4 10.4 11.2 Q13 10.6 13.6 12.4 Q11 12.6 9.8 14.4 Q11.6 18.4 16 17.6 Q19 16.8 19.8 13.6 Q21.6 18.6 17.4 21.6 Q12 24.4 6.8 21 Q2.6 17.4 4.4 10.6Z" fill="#ff7a1c"/></svg>
  <!-- word -->
  <svg class="abs" style="left:545px;top:8.5px" width="24" height="24" viewBox="0 0 24 24"><rect x="1.2" y="0.8" width="20.8" height="20.4" rx="1" fill="#fdfeff" stroke="#9cc0ea" stroke-width="0.9"/><path d="M1.6 13.5 H21.6 V20.8 H1.6Z" fill="#e4eefa"/><path d="M3 3 H6.4 L8 11.4 L10.2 3 H12.8 L15 11.4 L16.6 3 H20 L16.8 15.4 H13.6 L11.5 7.8 L9.4 15.4 H6.2Z" fill="#1c55b4"/><path d="M14.5 14.2 L22.8 11 L23.6 18.6 L15.6 21.2Z" fill="#f7f9fc" stroke="#c2cad6" stroke-width="0.5"/><path d="M16.6 16 L21.4 14.2 M16.9 17.8 L21.7 16" stroke="#b3bcc9" stroke-width="0.6"/></svg>
  <!-- chrome (active) -->
  <div class="abs" style="left:583px;top:0;width:48px;height:40px;background:#594b47"></div>
  <div class="abs" style="left:583px;top:37.7px;width:48px;height:2.3px;background:#76b9ed"></div>
  <svg class="abs" style="left:594px;top:7px" width="24" height="24" viewBox="0 0 24 24"><circle cx="12" cy="12" r="11" fill="#fbc116"/><path d="M12 12 L2.47 6.5 A11 11 0 0 1 21.53 6.5Z" fill="#e33b2e"/><path d="M12 12 L2.47 6.5 A11 11 0 0 0 12 23 L17 14.5Z" fill="#2da94f"/><path d="M2.47 6.5 A11 11 0 0 1 21.53 6.5 H12Z" fill="#e33b2e"/><circle cx="12" cy="12" r="5.2" fill="#fff"/><circle cx="12" cy="12" r="4.1" fill="#3f86f4"/></svg>
  <div class="abs" style="left:606px;top:30px;width:14px;height:14px;border-radius:7px;background:#e8407a;color:#fff;font-size:8.5px;line-height:14px;text-align:center;margin-top:-10px">P</div>
  <!-- tray -->
  <svg class="abs" style="left:1140px;top:14px" width="14" height="12" viewBox="0 0 14 12"><path d="M1.5 9 L7 3.5 L12.5 9" fill="none" stroke="#fff" stroke-width="1.2"/></svg>
  <svg class="abs" style="left:1162px;top:12px" width="18" height="16" viewBox="0 0 18 16"><rect x="5.5" y="4.5" width="10.5" height="7" fill="none" stroke="#fff" stroke-width="1"/><rect x="16.2" y="6.5" width="1.2" height="3" fill="#fff"/><rect x="6.5" y="5.5" width="6.5" height="5" fill="#fff"/><path d="M2.2 2 V4 M4.6 2 V4" stroke="#fff" stroke-width="1"/><path d="M1.2 4 H5.6 V6.5 Q5.6 8 3.4 8 Q1.2 8 1.2 6.5Z" fill="#fff"/><path d="M3.4 8 V10.5 H6" fill="none" stroke="#fff" stroke-width="1"/></svg>
  <svg class="abs" style="left:1186px;top:11px" width="18" height="18" viewBox="0 0 18 18"><path d="M1.5 6.8 H4.2 L7.8 3.4 V14.6 L4.2 11.2 H1.5Z" fill="none" stroke="#fff" stroke-width="1"/><path d="M10 6.6 Q11.4 9 10 11.4 M12 4.8 Q14.4 9 12 13.2 M14 3 Q17.4 9 14 15" fill="none" stroke="#fff" stroke-width="1"/></svg>
  <div class="tb" style="left:1213px;top:13px;font-size:11.2px;line-height:14px;letter-spacing:-0.6px">ENG</div>
  <div class="tb" style="left:1264.4px;top:4px;font-size:11.6px;line-height:14px;letter-spacing:-0.55px">10:40</div>
  <div class="tb" style="left:1248.7px;top:21.5px;font-size:12px;line-height:14px;letter-spacing:-0.36px">27-12-2025</div>
  <svg class="abs" style="left:1324px;top:11px" width="18" height="18" viewBox="0 0 18 18"><path d="M1 1.5 H17 V13 H11.5 L9 15.5 L6.5 13 H1Z" fill="none" stroke="#fff" stroke-width="1.1"/></svg>
  <div class="abs" style="left:1361px;top:0;width:1px;height:40px;background:#7a6c6c"></div>
</div>

</div>
</body>
</html>
